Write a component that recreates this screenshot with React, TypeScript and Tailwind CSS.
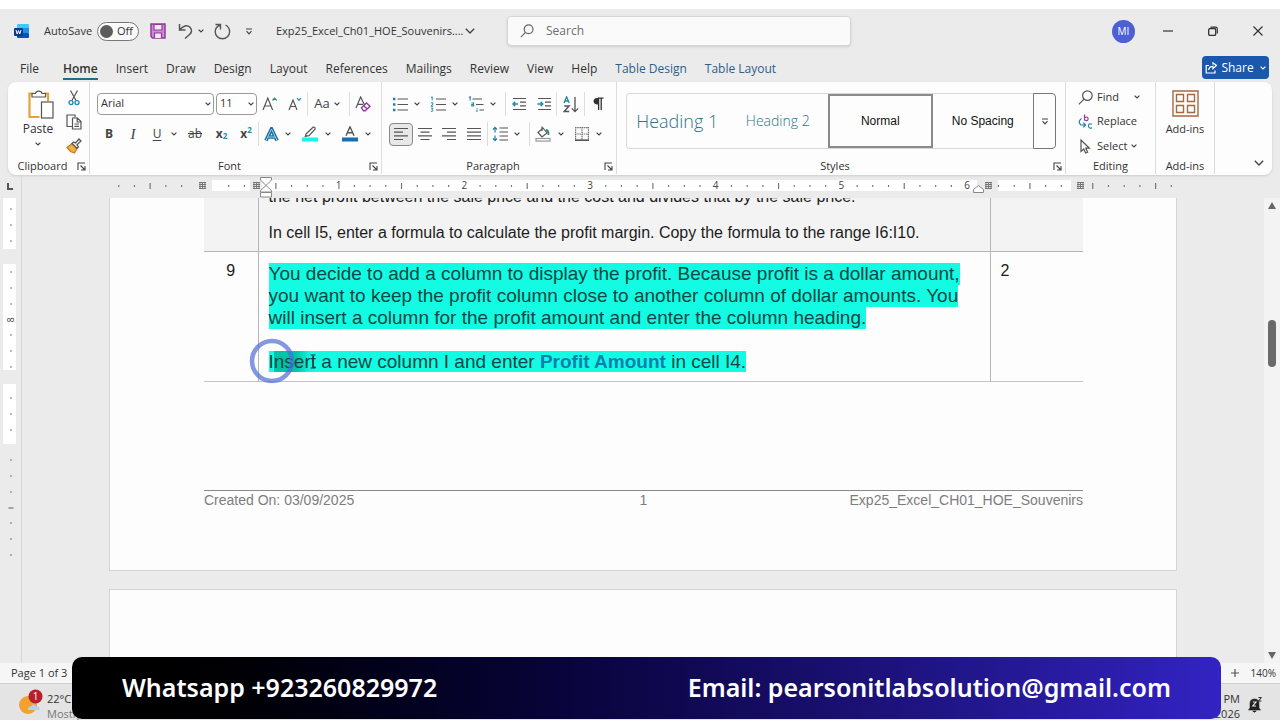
import React from 'react';
import clsx from 'clsx';

const uiFont = "font-['Open_Sans','Noto_Sans',sans-serif]";
const docFont = "font-['Liberation_Sans',Arial,sans-serif]";

const TABS = [
  'File',
  'Home',
  'Insert',
  'Draw',
  'Design',
  'Layout',
  'References',
  'Mailings',
  'Review',
  'View',
  'Help',
  'Table Design',
  'Table Layout',
];

type IconProps = {
  w?: number;
  h?: number;
  className?: string;
  children: React.ReactNode;
};

const Icon: React.FC<IconProps> = ({ w = 16, h = 16, className, children }) => (
  <svg
    width={w}
    height={h}
    viewBox={`0 0 ${w} ${h}`}
    fill="none"
    stroke="#555"
    strokeWidth="1.2"
    className={clsx('shrink-0', className)}
    aria-hidden="true"
  >
    {children}
  </svg>
);

const Chevron: React.FC<{ className?: string }> = ({ className }) => (
  <Icon w={6} h={4} className={className}>
    <path d="M0.6 0.6 L3 3 L5.4 0.6" stroke="#444" />
  </Icon>
);

const BigChevron = () => (
  <Icon w={10} h={6}>
    <path d="M0.8 0.8 L5 5 L9.2 0.8" stroke="#444" strokeWidth="1.4" />
  </Icon>
);

const Launcher = () => (
  <Icon w={9} h={9}>
    <path d="M1 8V1H8 M3.5 3.5L7.5 7.5 M8 4V8H4" stroke="#444" strokeWidth="1.1" />
  </Icon>
);

type ToolProps = {
  label: string;
  className?: string;
  children: React.ReactNode;
};

const Tool: React.FC<ToolProps> = ({ label, className = 'w-6', children }) => (
  <button
    type="button"
    aria-label={label}
    className={clsx('flex h-6 shrink-0 items-center justify-center text-[#444]', className)}
  >
    {children}
  </button>
);

const DropTool: React.FC<{ label: string }> = ({ label }) => (
  <Tool label={label} className="w-[10px]">
    <Chevron />
  </Tool>
);

const Sep: React.FC<{ className?: string }> = ({ className }) => (
  <div className={clsx('h-6 w-px shrink-0 bg-[#dcdcdc]', className)} />
);

type GroupProps = {
  name: string;
  className?: string;
  launcher?: boolean;
  children: React.ReactNode;
};

const Group: React.FC<GroupProps> = ({ name, className, launcher, children }) => (
  <section className={clsx('flex flex-col border-r border-[#dcdcdc]', className)}>
    <div className="flex-1">{children}</div>
    <div className="flex h-4 items-center text-[11px] text-[#333]">
      <span className="flex-1 text-center whitespace-nowrap">{name}</span>
      {launcher && (
        <button type="button" aria-label={`${name} settings`} className="mr-[3px]">
          <Launcher />
        </button>
      )}
    </div>
  </section>
);

const TitleBar = () => (
  <header className="flex h-11 items-center">
    <div className="flex w-[507px] shrink-0 items-center pl-[14px] text-[11px] text-[#333]">
      <Icon w={16} h={16}>
        <rect x="3" y="1" width="12" height="5" rx="1" fill="#41c8f5" stroke="none" />
        <rect x="3" y="5" width="12" height="5" fill="#1e90e6" stroke="none" />
        <rect x="3" y="10" width="12" height="5" rx="1" fill="#0b4fc0" stroke="none" />
        <rect x="0" y="5" width="9" height="8" rx="1" fill="#0a3a8c" stroke="none" />
        <path d="M2 7 L3.2 11 L4.5 7.6 L5.8 11 L7 7" stroke="#fff" strokeWidth="1" />
      </Icon>
      <span className="ml-[14px] w-[53px]">AutoSave</span>
      <button
        type="button"
        role="switch"
        aria-checked="false"
        aria-label="AutoSave"
        className="flex h-[19px] w-[42px] items-center gap-1 rounded-full border border-[#777] bg-[#fafafa] px-[2px]"
      >
        <span className="size-[13px] rounded-full bg-[#5c5c5c]" />
        <span>Off</span>
      </button>
      <button type="button" aria-label="Save" className="ml-[11px]">
        <Icon w={16} h={16}>
          <path d="M1 1H15V15H2.5L1 13.5Z" fill="#c98fd0" stroke="#95399f" strokeWidth="1.5" />
          <path d="M4 1.5H12V7H4Z M4.5 15V10H11.5V15" fill="#f4eaf5" stroke="#95399f" />
        </Icon>
      </button>
      <button type="button" aria-label="Undo" className="ml-3">
        <Icon w={16} h={17}>
          <path d="M1.5 1V7H7.5 M1.8 6.6C5 3 9 1.2 12 4.2C14.8 7.2 13.5 10 11 12L7 15.5" strokeWidth="1.5" />
        </Icon>
      </button>
      <button type="button" aria-label="Undo options" className="ml-1 flex h-4 items-center">
        <Chevron />
      </button>
      <button type="button" aria-label="Redo" className="ml-[10px]">
        <Icon w={17} h={17}>
          <path d="M1.5 1.5H6.5V6.5 M6.2 2C3 3.2 1.2 5.8 1.2 8.8C1.2 12.8 4.5 15.8 8.4 15.8C12.4 15.8 15.6 12.8 15.6 8.8C15.6 5.8 14.2 3.4 11.5 2" strokeWidth="1.4" />
        </Icon>
      </button>
      <button type="button" aria-label="Customize toolbar" className="ml-[14px]">
        <Icon w={8} h={7}>
          <path d="M1 1H7 M1.5 3.2L4 5.8L6.5 3.2" stroke="#444" />
        </Icon>
      </button>
      <span className="ml-[23px] w-[180px] whitespace-nowrap">Exp25_Excel_Ch01_HOE_Souvenirs....</span>
      <button type="button" aria-label="File menu" className="ml-[9px]">
        <BigChevron />
      </button>
    </div>
    <label className="flex h-[30px] w-[344px] items-center gap-3 rounded border border-[#d6d6d6] bg-[#fafafa] px-3 shadow-sm">
      <Icon w={14} h={14}>
        <circle cx="8.6" cy="5.2" r="4.4" stroke="#666" />
        <path d="M5.5 8.4L0.8 13.2" stroke="#666" />
      </Icon>
      <input
        type="text"
        placeholder="Search"
        aria-label="Search"
        className="w-full bg-transparent text-xs text-[#333] outline-none placeholder:text-[#6e6e6e]"
      />
    </label>
    <div className="ml-auto flex items-center">
      <button
        type="button"
        className="mr-7 flex size-[23px] items-center justify-center rounded-full bg-[#4c5fd5] text-[10px] text-white"
      >
        MI
      </button>
      <button type="button" aria-label="Minimize" className="mr-[35px]">
        <Icon w={10} h={10}>
          <path d="M0 5H10" stroke="#333" />
        </Icon>
      </button>
      <button type="button" aria-label="Restore" className="mr-[35px]">
        <Icon w={10} h={10}>
          <rect x="0.7" y="2.5" width="7" height="7" rx="1.4" stroke="#333" strokeWidth="1.3" />
          <path d="M2.6 1.2H7.6Q9.3 1.2 9.3 3V7.6" stroke="#333" />
        </Icon>
      </button>
      <button type="button" aria-label="Close" className="mr-[17px]">
        <Icon w={10} h={10}>
          <path d="M0.5 0.5L9.5 9.5M9.5 0.5L0.5 9.5" stroke="#333" />
        </Icon>
      </button>
    </div>
  </header>
);

const TabBar = () => (
  <nav className="flex h-[29px] items-center gap-[18px] pr-[11px] pl-5">
    {TABS.map((tab) => (
      <button
        key={tab}
        type="button"
        className={clsx(
          'border-b-2 pt-1 text-xs leading-[18px] whitespace-nowrap',
          tab === 'File' && 'pr-1.5',
          tab === 'Home' ? 'border-[#2b6a86] font-semibold' : 'border-transparent',
          tab.startsWith('Table') ? 'text-[#2b5f8c]' : 'text-[#333]'
        )}
      >
        {tab}
      </button>
    ))}
    <button
      type="button"
      className="ml-auto flex h-[23px] w-[67px] items-center justify-center gap-1 rounded bg-[#1a57ad] text-xs text-white"
    >
      <Icon w={12} h={12}>
        <path d="M4 3.5H1.2V11H10V8.5 M3.6 8C4 5.5 5.6 4.3 8 4.3V6.6L11.4 3.4L8 0.8V2.6" stroke="#fff" />
      </Icon>
      Share
      <Icon w={6} h={4} className="ml-[2px]">
        <path d="M0.6 0.6 L3 3 L5.4 0.6" stroke="#fff" />
      </Icon>
    </button>
  </nav>
);

const ClipboardGroup = () => (
  <Group name="Clipboard" launcher className="w-[82px] shrink-0">
    <div className="flex gap-1 pl-2">
      <button type="button" className="flex w-11 flex-col items-center pt-[8px] text-xs text-[#333]">
        <Icon w={27} h={30} className="ml-1">
          <path d="M7 3.5H2.5V27H12.5" stroke="#dfa53a" strokeWidth="2.2" />
          <path d="M17 3.5H21V11" stroke="#dfa53a" strokeWidth="2.2" />
          <path d="M5 7V3.5H8.5C9 0.4 14.5 0.4 15 3.5H18.5V7Z" fill="#fff" />
          <rect x="14.5" y="12" width="11.5" height="16" fill="#fff" />
        </Icon>
        <span className="leading-[18px]">Paste</span>
        <Chevron className="mt-1" />
      </button>
      <div className="flex flex-col items-center pt-1">
        <Tool label="Cut" className="w-5">
          <Icon w={12} h={16}>
            <path d="M2.5 0.5L8.2 10.8 M9.5 0.5L3.8 10.8" />
            <circle cx="3" cy="12.6" r="2" stroke="#1e8bc3" strokeWidth="1.4" />
            <circle cx="9" cy="12.6" r="2" stroke="#1e8bc3" strokeWidth="1.4" />
          </Icon>
        </Tool>
        <Tool label="Copy" className="w-5">
          <Icon w={16} h={16}>
            <path d="M6 12.5H1V1H9V3.5" />
            <path d="M6.5 4H11.5L15 7.5V15H6.5Z M11.2 4V8H15 M8.5 10H13 M8.5 12.4H13" fill="#fff" />
          </Icon>
        </Tool>
        <Tool label="Format Painter" className="w-5">
          <Icon w={16} h={16}>
            <path d="M1 9.5L6 5.5L11 10.5L8.5 15L4.5 13.5Z" fill="#f0b04a" stroke="#c97b1c" />
            <path d="M6 5.5L11 10.5L12.5 9L11 6.8L15 3L13 1L9.5 5L7.5 4Z" fill="#eee" stroke="#555" />
          </Icon>
        </Tool>
      </div>
    </div>
  </Group>
);

const FontGroup = () => (
  <Group name="Font" launcher className="w-[292px] shrink-0">
    <div className="flex flex-col gap-[6px] pt-[10px] pl-[7px]">
      <div className="flex items-center">
        <div className="relative mr-0.5 flex h-6 w-[117px] items-center">
          <select
            aria-label="Font name"
            className="h-[22px] w-full appearance-none rounded border border-[#999] bg-white pb-0.5 pl-[3px] text-[11px] text-[#333]"
          >
            <option>Arial</option>
          </select>
          <Chevron className="pointer-events-none absolute right-[3px]" />
        </div>
        <div className="relative flex h-6 w-[41px] items-center">
          <select
            aria-label="Font size"
            className="h-[22px] w-full appearance-none rounded border border-[#999] bg-white pb-0.5 pl-[3px] text-[11px] text-[#333]"
          >
            <option>11</option>
          </select>
          <Chevron className="pointer-events-none absolute right-[3px]" />
        </div>
        <Tool label="Grow font" className="w-[25px]">
          <Icon w={16} h={16}>
            <path d="M1 14L5.8 2L10.6 14 M2.8 10H8.8" />
            <path d="M10.5 4.5L12.6 2.2L14.7 4.5" stroke="#1e8ba0" />
          </Icon>
        </Tool>
        <Tool label="Shrink font" className="w-[25px]">
          <Icon w={14} h={16}>
            <path d="M1 14L5 4L9 14 M2.6 10.5H7.4" />
            <path d="M9 2.2L11 4.4L13 2.2" stroke="#1e8ba0" />
          </Icon>
        </Tool>
        <Sep />
        <Tool label="Change case" className="w-[38px] gap-1 text-[13px]">
          Aa
          <Chevron />
        </Tool>
        <Sep className="ml-[3px]" />
        <Tool label="Clear formatting" className="w-[26px]">
          <Icon w={17} h={16}>
            <path d="M1 12L5.6 1L9.5 9 M2.8 8.4H8" />
            <path d="M6.5 11.8L11.5 7L15 10.2L10.2 14.8H8.5Z M8.7 9.8L12.2 13" fill="#fff" stroke="#95399f" strokeWidth="1.4" />
          </Icon>
        </Tool>
      </div>
      <div className="flex items-center">
        <Tool label="Bold" className="w-6 text-xs font-bold">
          B
        </Tool>
        <Tool label="Italic" className="w-6 font-['Liberation_Serif',serif] text-[15px] italic">
          I
        </Tool>
        <Tool label="Underline" className="w-6 text-xs underline underline-offset-2">
          U
        </Tool>
        <DropTool label="Underline style" />
        <Tool label="Strikethrough" className="ml-0.5 w-7 text-xs line-through">
          ab
        </Tool>
        <Tool label="Subscript" className="w-[25px] text-xs font-bold">
          x<sub className="text-[8px] text-[#1e8ba0]">2</sub>
        </Tool>
        <Tool label="Superscript" className="w-6 text-xs font-bold">
          x<sup className="text-[8px] text-[#1e8ba0]">2</sup>
        </Tool>
        <Sep />
        <Tool label="Text effects">
          <Icon w={15} h={15}>
            <path d="M2 13.5L7.5 2L13 13.5 M4 10H11" stroke="#1b6e9c" strokeWidth="3.6" />
            <path d="M2 13.5L7.5 2L13 13.5 M4 10H11" stroke="#9fd3ec" strokeWidth="1" />
          </Icon>
        </Tool>
        <DropTool label="Text effects options" />
        <Tool label="Highlight" className="ml-1 w-[26px]">
          <Icon w={16} h={16}>
            <path d="M4 8L11 1.2Q13.5 0.6 13 3.2L7 9.6L3.5 10Z M2.5 10.5L6.5 9.8" />
            <rect x="0" y="11.5" width="16" height="4" fill="#15f3ee" stroke="none" />
          </Icon>
        </Tool>
        <DropTool label="Highlight color" />
        <Tool label="Font color" className="ml-1 w-[26px]">
          <Icon w={16} h={16}>
            <path d="M4 9.8L8 0.8L12 9.8 M5.4 6.8H10.6" strokeWidth="1.4" />
            <rect x="0" y="11.5" width="16" height="4" fill="#166fae" stroke="none" />
          </Icon>
        </Tool>
        <DropTool label="Font color options" />
      </div>
    </div>
  </Group>
);

const ParagraphGroup = () => (
  <Group name="Paragraph" launcher className="w-[235px] shrink-0">
    <div className="flex flex-col gap-[6px] pt-[10px] pl-[6px]">
      <div className="flex items-center">
        <Tool label="Bullets">
          <Icon>
            <path d="M5.5 3H16 M5.5 8.5H16 M5.5 14H16" />
            <path d="M1 3H3.4 M1 8.5H3.4 M1 14H3.4" stroke="#1e7fa8" strokeWidth="2.4" />
          </Icon>
        </Tool>
        <DropTool label="Bullet library" />
        <Tool label="Numbering" className="ml-1 w-6">
          <Icon>
            <path d="M6 3H16 M6 8.5H16 M6 14H16" />
            <path d="M1 1.5L2.2 0.8V4.4 M0.8 7Q3.4 5.8 3 8L1 10.2H3.4 M0.8 12.2H3L2 13.6Q4 14.4 2.4 15.4L0.8 15.2" stroke="#1e8ba0" strokeWidth="1" />
          </Icon>
        </Tool>
        <DropTool label="Numbering library" />
        <Tool label="Multilevel list" className="ml-1 w-6">
          <Icon>
            <path d="M4.5 3H14 M8 8.5H15.5 M11.5 14H16" />
            <path d="M1 1.5L2.2 0.8V4.4 M3.4 7H5.6V10H3.8V8.5H5.4 M9 12V12.8 M9 13.6V16" stroke="#1e8ba0" strokeWidth="1.1" />
          </Icon>
        </Tool>
        <DropTool label="List library" />
        <Sep className="ml-[7px]" />
        <Tool label="Decrease indent" className="w-[25px]">
          <Icon w={14} h={14}>
            <path d="M1 1.5H14 M8 5.2H14 M8 8.8H14 M1 12.5H14" />
            <path d="M6 7H1 M3.2 4.8L1 7L3.2 9.2" stroke="#1e8ba0" strokeWidth="1.4" />
          </Icon>
        </Tool>
        <Tool label="Increase indent" className="w-[25px]">
          <Icon w={14} h={14}>
            <path d="M1 1.5H14 M8 5.2H14 M8 8.8H14 M1 12.5H14" />
            <path d="M0.5 7H5.8 M3.6 4.8L5.8 7L3.6 9.2" stroke="#1e8ba0" strokeWidth="1.4" />
          </Icon>
        </Tool>
        <Sep />
        <Tool label="Sort" className="w-[27px]">
          <Icon w={16} h={17}>
            <path d="M1 7L3.6 0.8L6.2 7 M1.8 5H5.4" stroke="#1e8ba0" strokeWidth="1.3" />
            <path d="M1.2 10H6L1.2 15.6H6.2" strokeWidth="1.5" />
            <path d="M12 1V15.5 M8.8 12.4L12 15.6L15.2 12.4" strokeWidth="1.3" />
          </Icon>
        </Tool>
        <Sep />
        <Tool label="Show paragraph marks" className="w-[26px]">
          <Icon w={12} h={14}>
            <path d="M6 1.2H11.5 M6.6 1V13 M9.2 1V13" stroke="#333" strokeWidth="1.3" />
            <path d="M6.5 1H5C0.4 1 0.4 7.4 5 7.4H6.5Z" fill="#333" stroke="none" />
          </Icon>
        </Tool>
      </div>
      <div className="flex items-center pl-px">
        <button
          type="button"
          aria-label="Align left"
          aria-pressed="true"
          className="flex h-[23px] w-6 shrink-0 items-center justify-center rounded border border-[#888] bg-[#e8e8e8]"
        >
          <Icon w={14} h={14}>
            <path d="M0 1.5H14 M0 5.2H9 M0 8.8H14 M0 12.5H9" />
          </Icon>
        </button>
        <Tool label="Align center">
          <Icon w={14} h={14}>
            <path d="M0 1.5H14 M2.5 5.2H11.5 M0 8.8H14 M2.5 12.5H11.5" />
          </Icon>
        </Tool>
        <Tool label="Align right">
          <Icon w={14} h={14}>
            <path d="M0 1.5H14 M5 5.2H14 M0 8.8H14 M5 12.5H14" />
          </Icon>
        </Tool>
        <Tool label="Justify" className="w-[26px]">
          <Icon w={14} h={14}>
            <path d="M0 1.5H14 M0 5.2H14 M0 8.8H14 M0 12.5H14" />
          </Icon>
        </Tool>
        <Sep />
        <Tool label="Line spacing">
          <Icon>
            <path d="M7.5 2H16 M7.5 6H16 M7.5 10H16 M7.5 14H16" />
            <path d="M3 1.5V6.5 M1 3.5L3 1.4L5 3.5 M3 9.5V14.5 M1 12.5L3 14.6L5 12.5" stroke="#1e7fa8" />
          </Icon>
        </Tool>
        <DropTool label="Line spacing options" />
        <Sep className="ml-[7px]" />
        <Tool label="Shading" className="w-[26px]">
          <Icon>
            <path d="M3 6.5L8 2L12 7L7 11L3 6.5Z M7 0.5V5" />
            <path d="M11 4Q14 4.5 13.4 9" stroke="#2c8a78" strokeWidth="1.8" />
            <rect x="1" y="12.5" width="14" height="2.6" stroke="#999" />
          </Icon>
        </Tool>
        <DropTool label="Shading color" />
        <Tool label="Borders" className="ml-1 w-6">
          <Icon w={14} h={14}>
            <path d="M0.6 0V13 M0 0.6H14 M13.4 0V13 M7 0V13 M0 7H14" stroke="#777" strokeDasharray="1.6 0.6" />
            <path d="M0 13.2H14" strokeWidth="1.6" />
          </Icon>
        </Tool>
        <DropTool label="Border options" />
      </div>
    </div>
  </Group>
);

const StylesGroup = () => (
  <Group name="Styles" launcher className="min-w-0 flex-1">
    <div className="flex pt-[11px] pr-[9px] pl-[9px]">
      <div className="flex h-14 flex-1 items-stretch rounded-l border border-r-0 border-[#d8d8d8]">
        <button type="button" className="flex-1 text-lg font-light whitespace-nowrap text-[#2e7488]">
          Heading 1
        </button>
        <button type="button" className="flex-1 text-sm font-light whitespace-nowrap text-[#2e7488]">
          Heading 2
        </button>
        <button
          type="button"
          aria-pressed="true"
          className={clsx('flex-1 border-2 border-[#8a8a8a] text-xs whitespace-nowrap text-[#111]', docFont)}
        >
          Normal
        </button>
        <button type="button" className={clsx('flex-1 text-xs whitespace-nowrap text-[#111]', docFont)}>
          No Spacing
        </button>
      </div>
      <button
        type="button"
        aria-label="More styles"
        className="flex h-14 w-[23px] items-center justify-center rounded-r border border-[#777]"
      >
        <Icon w={8} h={7}>
          <path d="M1 1H7 M1.5 3.2L4 5.8L6.5 3.2" stroke="#444" />
        </Icon>
      </button>
    </div>
  </Group>
);

const EditingGroup = () => (
  <Group name="Editing" className="w-[90px] shrink-0">
    <div className="flex flex-col pt-[3px] pl-3 text-[11px] text-[#333]">
      <div className="flex h-6 items-center">
        <button type="button" className="flex items-center gap-1">
          <Icon w={15} h={15}>
            <circle cx="9.4" cy="5.6" r="4.8" />
            <path d="M6 9.2L0.8 14.4" />
          </Icon>
          Find
        </button>
        <button type="button" aria-label="Find options" className="mr-[15px] ml-auto">
          <Chevron />
        </button>
      </div>
      <button type="button" className="flex h-[25px] items-center gap-1">
        <Icon w={15} h={15}>
          <path d="M6.5 0.5V6.5 M6.5 4Q8.5 2 10 4Q10.4 6.6 8.4 6.6L6.5 6" stroke="#95399f" />
          <path d="M14 10.2Q10.6 9 10.4 11.8Q10.6 14.8 14 13.8" stroke="#1e8ba0" />
          <path d="M3.4 4.5Q-0.8 8 3 11H7.4 M5.2 8.6L7.6 11L5.2 13.4" stroke="#1e7fa8" />
        </Icon>
        Replace
      </button>
      <button type="button" className="flex h-6 items-center gap-1">
        <Icon w={15} h={15}>
          <path d="M3 1V12.5L5.8 10L7.6 14L9.6 13.2L7.8 9.2H11.4Z" />
        </Icon>
        Select
        <Chevron />
      </button>
    </div>
  </Group>
);

const AddInsGroup = () => (
  <Group name="Add-ins" className="w-[59px] shrink-0">
    <button type="button" className="flex w-full flex-col items-center gap-1 pt-[8px] text-[11px] text-[#333]">
      <Icon w={27} h={27}>
        <path d="M1 1H26V26H1Z M4.5 4.500H11.5V11.5H4.5Z M15.5 4.5H22.5V11.5H15.5Z M4.5 15.5H11.5V22.5H4.5Z M15.5 15.5H22.5V22.5H15.5Z" stroke="#a5683f" strokeWidth="1.4" />
      </Icon>
      Add-ins
    </button>
  </Group>
);

const Ribbon = () => (
  <div className="mx-2 flex h-[93px] rounded-lg bg-[#fdfdfd] pb-[1px] shadow">
    <ClipboardGroup />
    <FontGroup />
    <ParagraphGroup />
    <StylesGroup />
    <EditingGroup />
    <AddInsGroup />
    <div className="flex w-[57px] shrink-0 items-end justify-end pr-2 pb-2">
      <button type="button" aria-label="Collapse ribbon">
        <BigChevron />
      </button>
    </div>
  </div>
);

const EIGHTH = 15.71;
const ORIGIN = 213;

const Grip: React.FC<{ x: number }> = ({ x }) => (
  <path
    d={`M${x - 3} 6.5h7M${x - 3} 8.5h7M${x - 3} 10.5h7M${x - 3} 12.5h7M${x - 2} 6v7M${x + 0.5} 6v7M${x + 3} 6v7`}
    stroke="#777"
  />
);

const HorizontalRuler = () => {
  const marks = [];
  for (let i = -6; i <= 61; i++) {
    const x = ORIGIN + i * EIGHTH;
    // skip the spots where the column grips sit
    if ([-1, 0, 3, 49, 55].includes(i)) continue;
    if (i > 0 && i % 8 === 0 && i < 56) {
      marks.push(
        <text key={i} x={x} y="13" textAnchor="middle" fontSize="10" fill="#444" stroke="none">
          {i / 8}
        </text>
      );
    } else {
      marks.push(
        <path key={i} d={i % 4 === 0 ? `M${x} 7v6` : `M${x} 9v2`} stroke="#777" strokeWidth="1.2" />
      );
    }
  }
  return (
    <svg width="1200" height="22" viewBox="0 0 1200 22" fill="none" className="shrink-0" aria-hidden="true">
      <path d="M8 7V13H13" stroke="#555" strokeWidth="2" />
      <path d="M21.5 0V22" stroke="#d6d6d6" />
      <rect x="212" y="4" width="38" height="11" fill="#fff" />
      <rect x="262" y="4" width="715" height="11" fill="#fff" />
      <rect x="998" y="4" width="73" height="11" fill="#fff" />
      {marks}
      <Grip x={202} />
      <Grip x={256} />
      <Grip x={988} />
      <Grip x={1080} />
      <path d="M260.5 1.5H271.5V4L266 9.5L260.5 4Z M260.5 16V14.5L266 9.5L271.5 14.5V16Z M260.5 16.5H271.5V21H260.5Z" fill="#fff" stroke="#888" />
      <path d="M973.5 16.5V13.5L978.5 9.5L983.5 13.5V16.5Z" fill="#fff" stroke="#888" />
    </svg>
  );
};

const VerticalRuler = () => (
  <div className="w-[22px] shrink-0 border-r border-[#d6d6d6]">
    <svg width="20" height="380" viewBox="0 0 20 380" fill="none" aria-hidden="true">
      <rect x="3" y="0" width="13" height="51" fill="#fff" />
      <rect x="3" y="66" width="13" height="106" fill="#fff" />
      <rect x="3" y="186" width="13" height="60" fill="#fff" />
      {[11, 27, 43, 74, 90, 106, 137, 153, 169, 200, 216, 232, 262, 278, 294, 325, 341, 357].map((y) => (
        <path key={y} d={`M10 ${y}h2`} stroke="#777" strokeWidth="1.2" />
      ))}
      <path d="M8.5 310h5" stroke="#777" strokeWidth="1.2" />
      <text x="0" y="0" transform="translate(14 122) rotate(-90)" textAnchor="middle" fontSize="9" fill="#444">
        8
      </text>
    </svg>
  </div>
);

const StepTable = () => (
  <table className="w-full table-fixed border-collapse text-[#1c1c1c]">
    <colgroup>
      <col className="w-[54px]" />
      <col />
      <col className="w-[93px]" />
    </colgroup>
    <tbody>
      <tr className="border-b border-[#b5b5b5] bg-[#f3f3f3] align-top">
        <td className="border-r border-[#b5b5b5]" />
        <td className="border-r border-[#b5b5b5] pb-[9px] pl-[10px] text-base leading-[18px] whitespace-nowrap">
          <p className="-mt-[10px] pb-[18px]">
            the net profit between the sale price and the cost and divides that by the sale price.
          </p>
          <p>In cell I5, enter a formula to calculate the profit margin. Copy the formula to the range I6:I10.</p>
        </td>
        <td />
      </tr>
      <tr className="border-b border-[#c4c4c4] align-top">
        <td className="border-r border-[#b5b5b5] pt-[9px] text-center text-base leading-5">9</td>
        <td className="border-r border-[#b5b5b5] pt-[11px] pb-[8px] pl-[10px] text-[19px] leading-[22px] whitespace-nowrap">
          <p className="text-[#0b4740]">
            <span className="bg-[#14fbe4] pb-px">
              You decide to add a column to display the profit. Because profit is a dollar amount,
              <br />
              you want to keep the profit column close to another column of dollar amounts. You
              <br />
              will insert a column for the profit amount and enter the column heading.
            </span>
          </p>
          <p className="relative mt-[22px] text-[#0b4740]">
            <span className="bg-[#14fbe4]">
              I<span className="bg-linear-to-r from-[#00c4a9] from-60% to-[#14fbe4]">nser</span>t a new column I and
              enter <strong className="text-[#0b7fae]">Profit Amount</strong> in cell I4.
            </span>
            <svg
              width="70"
              height="46"
              viewBox="0 0 70 46"
              className="pointer-events-none absolute -top-[13px] -left-[21px]"
              fill="none"
              aria-hidden="true"
            >
              <circle cx="24" cy="23" r="20" stroke="#4f6bd6" strokeOpacity="0.7" strokeWidth="4.5" />
              <path d="M62.5 17h5 M65 17v13 M62.5 30h5" stroke="#333" strokeWidth="1" />
            </svg>
          </p>
        </td>
        <td className="pt-[9px] pl-[10px] text-base leading-5">2</td>
      </tr>
    </tbody>
  </table>
);

const DocumentArea = () => (
  <main className={clsx('min-w-0 flex-1 px-[87px]', docFont)}>
    <article className="flex h-[373px] flex-col border border-t-0 border-[#d4d4d4] bg-[#fdfdfd] pr-[93px] pl-[94px]">
      <StepTable />
      <footer className="mt-auto mb-[61px] grid grid-cols-3 border-t border-[#8a8a8a] text-sm leading-[18px] text-[#7d7d7d]">
        <span>Created On: 03/09/2025</span>
        <span className="text-center">1</span>
        <span className="text-right">Exp25_Excel_CH01_HOE_Souvenirs</span>
      </footer>
    </article>
    <article className="mt-[18px] h-40 border border-[#d4d4d4] bg-[#fdfdfd]" />
  </main>
);

const ScrollBar = () => (
  <div className="flex w-4 shrink-0 flex-col items-center bg-[#f3f3f3] pt-1 pb-1">
    <Icon w={8} h={7}>
      <path d="M4 0L8 7H0Z" fill="#666" stroke="none" />
    </Icon>
    <div className="mt-[111px] h-[47px] w-2 rounded-full bg-[#6b6b6b]" />
    <Icon w={8} h={7} className="mt-auto">
      <path d="M4 7L8 0H0Z" fill="#666" stroke="none" />
    </Icon>
  </div>
);

const StatusBar = () => (
  <div className="flex h-[21px] items-center border-b border-[#cfcfcf] bg-[#f6f6f6] px-1 text-[#333]">
    <span className="ml-[7px] text-[11px]">Page 1 of 3</span>
    <button type="button" aria-label="Zoom in" className="mr-3 ml-auto">
      <Icon w={8} h={8}>
        <path d="M4 0V8M0 4H8" />
      </Icon>
    </button>
    <span className="text-[10px]">140%</span>
  </div>
);

const Taskbar = () => (
  <div className="flex h-9 items-start justify-between overflow-hidden bg-[#e4e4e4] pt-[7px] text-[11px] leading-[15px] text-[#333]">
    <div className="flex gap-1 pl-[19px]">
      <Icon w={24} h={26} className="-mt-[2px]">
        <circle cx="9" cy="16" r="9" fill="#f2a12c" stroke="none" />
        <path d="M9 21Q8 17.5 12 17.5Q14 14 17 17Q21.5 17 20.5 21Z" fill="#b9cdf3" stroke="none" />
        <circle cx="16.5" cy="7.5" r="7" fill="#b7202a" stroke="none" />
        <text x="16.5" y="11" textAnchor="middle" fontSize="10" fill="#fff" stroke="none">
          1
        </text>
      </Icon>
      <div>
        <div>22°C</div>
        <div className="text-[#777]">Mostly</div>
      </div>
    </div>
    <div className="flex gap-2 pr-[18px]">
      <div className="text-right">
        <div>PM</div>
        <div>2026</div>
      </div>
      <Icon w={14} h={16} className="mt-[6px]">
        <path d="M2 11V6.5Q2 2 6.5 2Q11 2 11 6.5V11L12.5 13H0.5Z M4.8 14H8.2Q6.5 16.5 4.8 14Z" fill="#222" stroke="#222" strokeWidth="0.6" />
        <path d="M4.8 5H8L4.8 9H8" stroke="#e4e4e4" />
        <path d="M10.5 0.6H13.4L10.5 4H13.4" stroke="#222" strokeWidth="1" />
      </Icon>
    </div>
  </div>
);

const ContactBanner = () => (
  <aside className="absolute right-[59px] bottom-[1px] left-[72px] flex h-[62px] items-center justify-between rounded-[10px] bg-linear-to-r from-black to-[#3323c4] px-[50px] font-['Noto_Sans','Open_Sans',sans-serif] text-[25px] font-semibold text-white">
    <span>Whatsapp +923260829972</span>
    <span>Email: pearsonitlabsolution@gmail.com</span>
  </aside>
);

export const App: React.FC = () => {
  return (
    <div className={clsx('relative flex h-screen flex-col overflow-hidden bg-[#ebebeb]', uiFont)}>
      <div className="h-[9px] shrink-0 bg-white" />
      <div className="shrink-0">
        <TitleBar />
        <TabBar />
        <Ribbon />
      </div>
      <div className="mt-px flex h-[22px] shrink-0 overflow-hidden">
        <HorizontalRuler />
      </div>
      <div className="flex min-h-0 flex-1 overflow-hidden">
        <VerticalRuler />
        <DocumentArea />
        <ScrollBar />
      </div>
      <div className="shrink-0">
        <StatusBar />
        <Taskbar />
      </div>
      <ContactBanner />
    </div>
  );
};

export default App;
